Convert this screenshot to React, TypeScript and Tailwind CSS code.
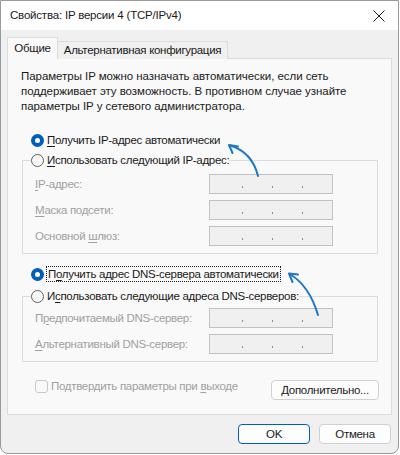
import React from 'react';

const Mn: React.FC<{ children: React.ReactNode }> = ({ children }) => (
  <span className="underline underline-offset-[2px] decoration-[1px]">{children}</span>
);

const Radio: React.FC<{ checked?: boolean }> = ({ checked }) =>
  checked ? (
    <span className="w-[13px] h-[13px] rounded-full bg-[#005fb8] flex items-center justify-center shrink-0">
      <span className="w-[5px] h-[5px] rounded-full bg-white" />
    </span>
  ) : (
    <span className="w-[13px] h-[13px] rounded-full border border-[#5f5f5f] bg-[#f7f7f7] shrink-0" />
  );

const IpField: React.FC = () => (
  <div className="w-[124px] h-[20px] border border-[#c2c2c2] bg-[#f0f0f0] flex items-end pb-[5px] pl-[32px] gap-[29px]">
    <span className="w-[1px] h-[2px] bg-[#8c8c8c]" />
    <span className="w-[1px] h-[2px] bg-[#8c8c8c]" />
    <span className="w-[1px] h-[2px] bg-[#8c8c8c]" />
  </div>
);

const FieldRow: React.FC<{ label: React.ReactNode }> = ({ label }) => (
  <div className="grid grid-cols-[174px_124px] items-center">
    <span className="text-[#a0a0a0]">{label}</span>
    <IpField />
  </div>
);

export default function App() {
  return (
    <div className="relative w-[400px] h-[455px] bg-white font-['Liberation_Sans',sans-serif] text-[11.5px] tracking-[-0.3px] leading-[15px] text-[#1a1a1a]">
      <div className="w-[399px] h-[454px] border border-[#9a9a9a] rounded-b-[8px] bg-[#f0f0f0] flex flex-col overflow-hidden">
        {/* title bar */}
        <div className="h-[29px] bg-white flex items-center justify-between pl-[9px] pr-[10px]">
          <span className="text-[11.5px] tracking-[-0.2px]">Свойства: IP версии 4 (TCP/IPv4)</span>
          <svg width="14" height="14" viewBox="0 0 14 14" className="mr-[2px]">
            <path d="M1.5 1.5 L12.5 12.5 M12.5 1.5 L1.5 12.5" stroke="#1a1a1a" strokeWidth="1" />
          </svg>
        </div>

        <div className="flex-1 px-[6px] pt-[8px]">
          {/* tabs */}
          <div className="flex items-end h-[21px] relative z-10 -mb-px">
            <div className="h-[22px] w-[51px] pt-[3px] text-center bg-[#f9f9f9] border border-b-0 border-[#dcdcdc]">Общие</div>
            <div className="h-[18px] w-[170px] pt-[1px] text-center bg-[#f0f0f0] border border-b-0 border-l-0 border-[#dcdcdc]">
              Альтернативная конфигурация
            </div>
          </div>

          {/* panel */}
          <div className="h-[357px] border border-[#dcdcdc] bg-[#f9f9f9] px-[13px] pt-[10px]">
            <p className="tracking-[-0.05px]">
              Параметры IP можно назначать автоматически, если сеть
              <br />
              поддерживает эту возможность. В противном случае узнайте
              <br />
              параметры IP у сетевого администратора.
            </p>

            <div className="mt-[18px] pl-[10px] h-[16px] flex items-center gap-[3px]">
              <Radio checked />
              <span>
                <Mn>П</Mn>олучить IP-адрес автоматически
              </span>
            </div>

            <fieldset className="mt-[4px] ml-[1px] border border-[#dcdcdc] pb-[7px]">
              <legend className="ml-[8px] h-[16px] flex items-center gap-[3px]">
                <Radio />
                <span>
                  <Mn>И</Mn>спользовать следующий IP-адрес:
                </span>
              </legend>
              <div className="mt-[6px] pl-[12px] flex flex-col gap-[6px]">
                <FieldRow label={<><Mn>I</Mn>P-адрес:</>} />
                <FieldRow label={<><Mn>М</Mn>аска подсети:</>} />
                <FieldRow label={<>Основной <Mn>ш</Mn>люз:</>} />
              </div>
            </fieldset>

            <div className="mt-[12px] pl-[10px] h-[16px] flex items-center gap-[2px]">
              <Radio checked />
              <span className="border border-dotted border-[#1a1a1a] px-[1px] leading-[14px]">
                П<Mn>о</Mn>лучить адрес DNS-сервера автоматически
              </span>
            </div>

            <fieldset className="mt-[6px] ml-[1px] border border-[#dcdcdc] pb-[7px]">
              <legend className="ml-[8px] h-[16px] flex items-center gap-[3px]">
                <Radio />
                <span>
                  И<Mn>с</Mn>пользовать следующие адреса DNS-серверов:
                </span>
              </legend>
              <div className="mt-[4px] pl-[12px] flex flex-col gap-[6px]">
                <FieldRow label={<>П<Mn>р</Mn>едпочитаемый DNS-сервер:</>} />
                <FieldRow label={<><Mn>А</Mn>льтернативный DNS-сервер:</>} />
              </div>
            </fieldset>

            <div className="mt-[18px] flex items-start justify-between">
              <div className="ml-[14px] -mt-px flex items-center gap-[3px] text-[#a0a0a0]">
                <span className="w-[13px] h-[13px] rounded-[3px] border border-[#c8c8c8] bg-[#f9f9f9]" />
                <span>
                  Подтвердить параметры при <Mn>в</Mn>ыходе
                </span>
              </div>
              <button className="w-[108px] h-[20px] mr-[-1px] rounded-[4px] border border-[#d0d0d0] bg-[#fdfdfd] text-[#1a1a1a]">
                <Mn>Д</Mn>ополнительно...
              </button>
            </div>
          </div>

          {/* dialog buttons */}
          <div className="mt-[9px] flex justify-end gap-[9px] pr-[1px]">
            <button className="w-[72px] h-[20px] rounded-[4px] border-[1.5px] border-[#005fb8] bg-[#fdfdfd]">OK</button>
            <button className="w-[72px] h-[20px] rounded-[4px] border border-[#d0d0d0] bg-[#fdfdfd]">Отмена</button>
          </div>
        </div>
      </div>

      {/* annotation arrows */}
      <svg className="absolute inset-0 pointer-events-none" width="400" height="455" viewBox="0 0 400 455">
        <g stroke="#1f76c9" strokeWidth="2" fill="none" strokeLinecap="round" strokeLinejoin="round">
          <path d="M258 176 Q252 152 230 145.5" />
          <path d="M229 145 L238 146.5 M229 145 L232.5 153" />
          <path d="M318 315 Q309 285 289.5 274" />
          <path d="M289 273.5 L298 274.5 M289 273.5 L292.5 282" />
        </g>
      </svg>
    </div>
  );
}
